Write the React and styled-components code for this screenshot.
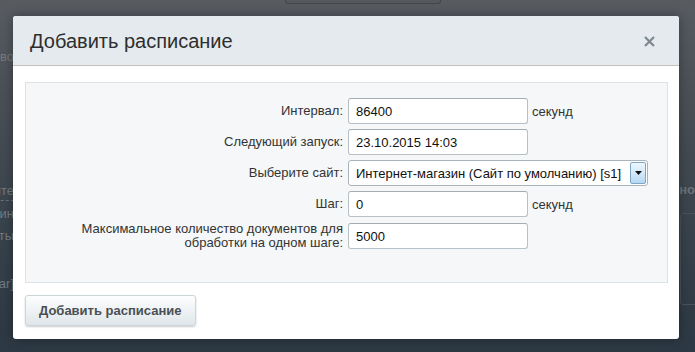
import styled, { createGlobalStyle } from "styled-components";

const GlobalStyle = createGlobalStyle`
  html, body {
    margin: 0;
    padding: 0;
  }
  body {
    font-family: "Liberation Sans", Arial, sans-serif;
    font-size: 13px;
    color: #333;
  }
`;

const rows = [
  { label: "Интервал:", value: "86400", unit: "секунд" },
  { label: "Следующий запуск:", value: "23.10.2015 14:03" },
  { label: "Выберите сайт:", value: "Интернет-магазин (Сайт по умолчанию) [s1]", select: true },
  { label: "Шаг:", value: "0", unit: "секунд" },
  {
    label: (
      <>
        Максимальное количество документов для
        <br />
        обработки на одном шаге:
      </>
    ),
    value: "5000",
  },
];

export default function App() {
  return (
    <Page>
      <GlobalStyle />
      <Backdrop>
        <BgSearch />
        <BgBody>
          <BgLeft>
            <BgText $top={44}>Поличество</BgText>
            <BgText $top={116} $dashed>Выберите</BgText>
            <BgText $top={4}>Интернет-магазин</BgText>
            <BgText $top={4}>Все сайты</BgText>
            <BgText $top={30}>[bar]</BgText>
          </BgLeft>
          <BgRight>
            <BgBold>Заблокировано</BgBold>
            <BgBox />
          </BgRight>
        </BgBody>
      </Backdrop>

      <Modal>
        <Header>
          <Title>Добавить расписание</Title>
          <Close aria-label="close">
            <svg width="11" height="11" viewBox="0 0 11 11">
              <path d="M1 1 L10 10 M10 1 L1 10" stroke="#7d8891" strokeWidth="2.2" />
            </svg>
          </Close>
        </Header>
        <Body>
          <Panel>
            <Form>
              {rows.map((r, i) => (
                <Row key={i}>
                  <Label>{r.label}</Label>
                  <Field>
                    {r.select ? (
                      <Select>
                        <SelectText>{r.value}</SelectText>
                        <SelectButton>
                          <svg width="7" height="4" viewBox="0 0 7 4">
                            <path d="M0 0 H7 L3.5 4 Z" fill="#111" />
                          </svg>
                        </SelectButton>
                      </Select>
                    ) : (
                      <Input>{r.value}</Input>
                    )}
                    {r.unit && <Unit>{r.unit}</Unit>}
                  </Field>
                </Row>
              ))}
            </Form>
          </Panel>
          <Button>Добавить расписание</Button>
        </Body>
      </Modal>
    </Page>
  );
}

const Page = styled.div`
  position: relative;
  width: 695px;
  height: 352px;
  overflow: hidden;
  background: linear-gradient(180deg, #585c61 0%, #474d54 35%, #36414b 70%, #2c3843 100%);
`;

const Backdrop = styled.div`
  display: flex;
  flex-direction: column;
  height: 100%;
`;

const BgSearch = styled.div`
  margin-left: 285px;
  width: 154px;
  height: 3px;
  border: 1px solid #43474b;
  border-top: none;
  border-radius: 0 0 3px 3px;
  background: #55595e;
`;

const BgBody = styled.div`
  display: flex;
  justify-content: space-between;
  flex: 1;
`;

const BgLeft = styled.div`
  display: flex;
  flex-direction: column;
  align-items: flex-end;
  width: 14px;
  overflow: hidden;
`;

const BgText = styled.div`
  margin-top: ${(p) => p.$top}px;
  white-space: nowrap;
  font-size: 13px;
  line-height: 18px;
  color: #737b82;
  border-bottom: ${(p) => (p.$dashed ? "1px dashed #6a737a" : "none")};
`;

const BgRight = styled.div`
  width: 15px;
  padding-top: 178px;
  overflow: hidden;
`;

const BgBold = styled.div`
  white-space: nowrap;
  font-weight: bold;
  font-size: 13px;
  color: #6b7279;
  direction: rtl;
  text-align: left;
  margin-left: 0;
`;

const BgBox = styled.div`
  margin-top: 16px;
  width: 40px;
  height: 90px;
  border: 1px solid #4a525a;
  border-radius: 3px;
`;

const Modal = styled.div`
  position: absolute;
  left: 13px;
  top: 16px;
  width: 666px;
  height: 323px;
  display: flex;
  flex-direction: column;
  background: #fff;
  border-radius: 3px;
  box-shadow: 0 0 12px rgba(0, 0, 0, 0.35);
  overflow: hidden;
`;

const Header = styled.div`
  display: flex;
  align-items: center;
  justify-content: space-between;
  height: 49px;
  padding: 0 24px 0 17px;
  background: #e4eaed;
  border-bottom: 1px solid #c4bfbb;
`;

const Title = styled.div`
  font-size: 20px;
  color: #2e2e2e;
  padding-top: 1px;
`;

const Close = styled.div`
  display: flex;
  width: 11px;
  height: 11px;
  margin-top: 1px;
`;

const Body = styled.div`
  display: flex;
  flex-direction: column;
  align-items: flex-start;
  gap: 12px;
  padding: 16px 11px 13px 12px;
`;

const Panel = styled.div`
  align-self: stretch;
  height: 199px;
  background: #f5f7f8;
  border: 1px solid #dce3e6;
  padding-top: 15px;
  box-sizing: border-box;
  height: 201px;
`;

const Form = styled.div`
  display: flex;
  flex-direction: column;
  gap: 5px;
`;

const Row = styled.div`
  display: grid;
  grid-template-columns: 317px 1fr;
  column-gap: 5px;
  align-items: center;
`;

const Label = styled.div`
  text-align: right;
  font-size: 13px;
  line-height: 14px;
  color: #333;
`;

const Field = styled.div`
  display: flex;
  align-items: center;
  gap: 4px;
`;

const Input = styled.div`
  box-sizing: border-box;
  width: 180px;
  height: 26px;
  padding: 0 7px;
  display: flex;
  align-items: center;
  background: #fff;
  border: 1px solid #b7c0c6;
  border-top-color: #a3acb2;
  border-radius: 3px;
  font-size: 13px;
  color: #111;
`;

const Unit = styled.span`
  font-size: 13px;
  color: #333;
`;

const Select = styled.div`
  box-sizing: border-box;
  width: 300px;
  height: 26px;
  display: flex;
  align-items: stretch;
  background: #fff;
  border: 1px solid #a9b3ba;
  border-radius: 3px;
  padding: 1px;
`;

const SelectText = styled.div`
  flex: 1;
  display: flex;
  align-items: center;
  padding-left: 6px;
  font-size: 13px;
  color: #111;
  white-space: nowrap;
`;

const SelectButton = styled.div`
  width: 14px;
  display: flex;
  align-items: center;
  justify-content: center;
  border: 1px solid #7fa6c6;
  border-radius: 2px;
  background: linear-gradient(180deg, #eef6fd 0%, #d3e9f9 50%, #b5d8f3 100%);
`;

const Button = styled.div`
  box-sizing: border-box;
  height: 31px;
  padding: 0 13px;
  display: flex;
  align-items: center;
  font-size: 13px;
  font-weight: bold;
  color: #4a4f53;
  background: linear-gradient(180deg, #fdfefe 0%, #eef2f4 50%, #dfe6e9 100%);
  border: 1px solid #cdd5d9;
  border-radius: 3px;
  box-shadow: 0 1px 2px rgba(0, 0, 0, 0.2);
`;
